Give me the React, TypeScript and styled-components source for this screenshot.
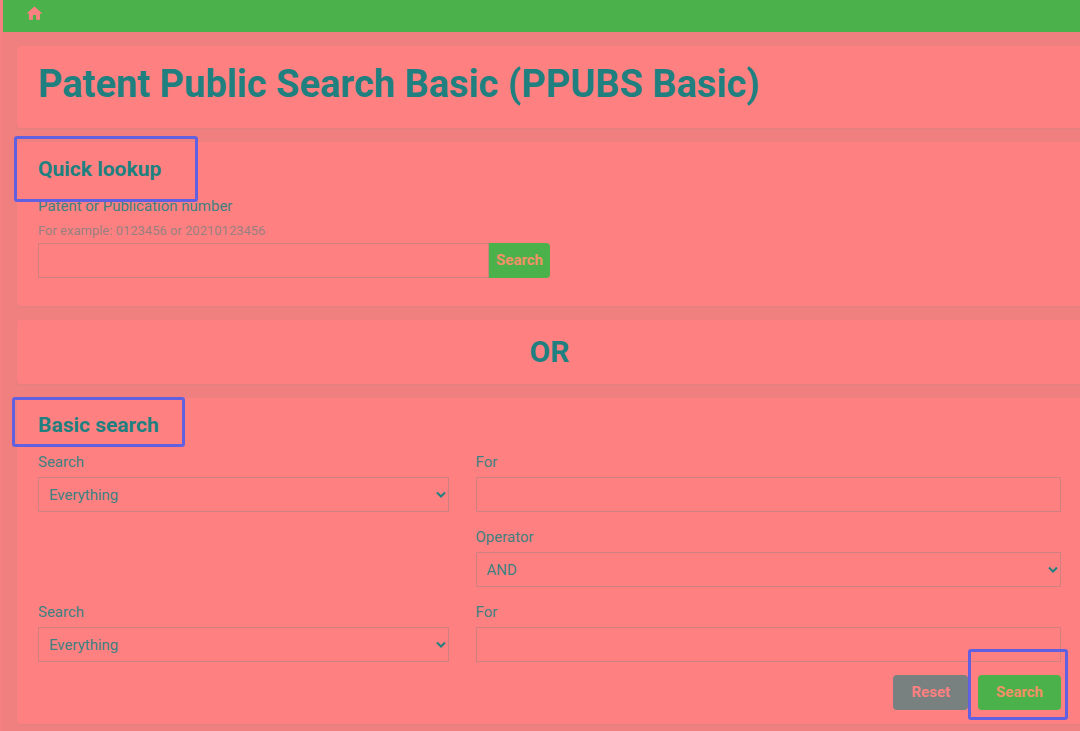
import React from "react";
import styled, { createGlobalStyle } from "styled-components";

const color = {
  surface: "#ff8080",
  page: "#f08080",
  green: "#4bb24b",
  heading: "#208080",
  text: "#408080",
  muted: "#988080",
  grey: "#788080",
  outline: "#d08080",
  mark: "#6060e0",
};

const GlobalStyle = createGlobalStyle`
  *, *::before, *::after { box-sizing: border-box; }
  body {
    margin: 0;
    background: ${color.page};
    color: ${color.text};
    font: 400 15px/20px Roboto, "Liberation Sans", sans-serif;
    overflow-x: hidden;
  }
`;

const Page = styled.div`
  border-left: 3px solid #f48080;
`;

const TopBar = styled.nav`
  display: flex;
  align-items: flex-start;
  height: 32px;
  padding: 4px 22px;
  background: ${color.green};
`;

const HomeLink = styled.a`
  display: flex;
  color: ${color.surface};
`;

const Main = styled.main`
  display: flex;
  flex-direction: column;
  gap: 14px;
  padding: 14px 0 14px 14px;
`;

const Card = styled.section<{ $pad: string }>`
  padding: ${(p) => p.$pad};
  background: ${color.surface};
  border-radius: 4px 0 0 4px;
  box-shadow: 0 1px 3px #e08080;
`;

const Title = styled.h1`
  margin: 0;
  color: ${color.heading};
  font: 700 38px/48px Roboto, "Liberation Sans", sans-serif;
`;

const OrHeading = styled.h2`
  margin: 0;
  color: ${color.heading};
  text-align: center;
  font: 700 30px/36px Roboto, "Liberation Sans", sans-serif;
`;

const SectionTitle = styled.h2`
  margin: 0 0 13px;
  color: ${color.heading};
  font: 700 21px/28px Roboto, "Liberation Sans", sans-serif;
`;

const Marked = styled.span<{ $inset: string }>`
  position: relative;
  display: inline-block;

  &::after {
    content: "";
    position: absolute;
    inset: ${(p) => p.$inset};
    border: 3px solid ${color.mark};
    border-radius: 3px;
    pointer-events: none;
  }
`;

const Label = styled.label`
  display: block;
  margin-bottom: 5px;
`;

const Hint = styled.p`
  margin: 0 0 2px;
  color: ${color.muted};
  font-size: 13px;
`;

const TextInput = styled.input`
  display: block;
  width: 100%;
  height: 35px;
  padding: 0 10px;
  border: 1px solid ${color.outline};
  border-radius: 0;
  background: transparent;
  color: inherit;
  font: inherit;
`;

const SelectWrap = styled.div`
  position: relative;

  svg {
    position: absolute;
    top: 14px;
    right: 3px;
    pointer-events: none;
  }
`;

const SelectBox = styled.select`
  display: block;
  appearance: none;
  width: 100%;
  height: 35px;
  padding: 0 24px 0 10px;
  border: 1px solid ${color.outline};
  border-radius: 0;
  background: transparent;
  color: inherit;
  font: inherit;
`;

const LookupRow = styled.div`
  display: flex;
  max-width: 512px;
`;

const Button = styled.button<{ $tone?: "grey"; $shape?: "attached" }>`
  flex: none;
  height: 35px;
  padding: 0 ${(p) => (p.$shape ? 7 : 18)}px 2px;
  border: 0;
  border-radius: ${(p) => (p.$shape ? "0 4px 4px 0" : "4px")};
  background: ${(p) => (p.$tone ? color.grey : color.green)};
  color: ${(p) => (p.$tone ? color.surface : "#f49068")};
  font: 700 15px/20px Roboto, "Liberation Sans", sans-serif;
`;

const Fields = styled.div`
  display: grid;
  grid-template-columns: repeat(12, minmax(0, 1fr));
  gap: 15px 27px;
`;

const Cell = styled.div<{ $side: "left" | "right" }>`
  grid-column: ${(p) => (p.$side === "left" ? "1 / span 5" : "6 / span 7")};
`;

const Actions = styled.div`
  display: flex;
  justify-content: flex-end;
  gap: 10px;
  margin-top: 13px;
`;

function Dropdown({ id, label, options }: { id: string; label: string; options: string[] }) {
  return (
    <>
      <Label htmlFor={id}>{label}</Label>
      <SelectWrap>
        <SelectBox id={id}>
          {options.map((o) => (
            <option key={o}>{o}</option>
          ))}
        </SelectBox>
        <svg width="10" height="8" viewBox="0 0 10 8" fill="none" aria-hidden="true">
          <path d="M1 1.500l4 4 4-4" stroke={color.heading} strokeWidth="2" />
        </svg>
      </SelectWrap>
    </>
  );
}

function TextField({ id, label }: { id: string; label: string }) {
  return (
    <>
      <Label htmlFor={id}>{label}</Label>
      <TextInput id={id} type="text" />
    </>
  );
}

export default function App() {
  return (
    <>
      <GlobalStyle />
      <Page>
        <TopBar>
          <HomeLink href="#" aria-label="Home">
            <svg width="19" height="19" viewBox="0 0 24 24" fill="currentColor" aria-hidden="true">
              <path d="M10 20v-6h4v6h5v-8h3L12 3 2 12h3v8z" />
            </svg>
          </HomeLink>
        </TopBar>
        <Main>
          <Card $pad="14px 19px 20px 21px">
            <Title>Patent Public Search Basic (PPUBS Basic)</Title>
          </Card>

          <Card $pad="13px 19px 28px 21px">
            <SectionTitle>
              <Marked $inset="-19px -37px -19px -24px">Quick lookup</Marked>
            </SectionTitle>
            <Label htmlFor="number">Patent or Publication number</Label>
            <Hint id="number-hint">For example: 0123456 or 20210123456</Hint>
            <LookupRow>
              <TextInput id="number" type="text" aria-describedby="number-hint" />
              <Button type="button" $shape="attached">Search</Button>
            </LookupRow>
          </Card>

          <Card $pad="14px 19px 14px 21px">
            <OrHeading>OR</OrHeading>
          </Card>

          <Card as="form" $pad="13px 19px 14px 21px">
            <SectionTitle>
              <Marked $inset="-14px -26px -8px -26px">Basic search</Marked>
            </SectionTitle>
            <Fields>
              <Cell $side="left">
                <Dropdown id="field-1" label="Search" options={["Everything"]} />
              </Cell>
              <Cell $side="right">
                <TextField id="term-1" label="For" />
              </Cell>
              <Cell $side="right">
                <Dropdown id="operator" label="Operator" options={["AND", "OR"]} />
              </Cell>
              <Cell $side="left">
                <Dropdown id="field-2" label="Search" options={["Everything"]} />
              </Cell>
              <Cell $side="right">
                <TextField id="term-2" label="For" />
              </Cell>
            </Fields>
            <Actions>
              <Button type="reset" $tone="grey">Reset</Button>
              <Marked $inset="-26px -7px -10px -10px">
                <Button type="button">Search</Button>
              </Marked>
            </Actions>
          </Card>
        </Main>
      </Page>
    </>
  );
}
